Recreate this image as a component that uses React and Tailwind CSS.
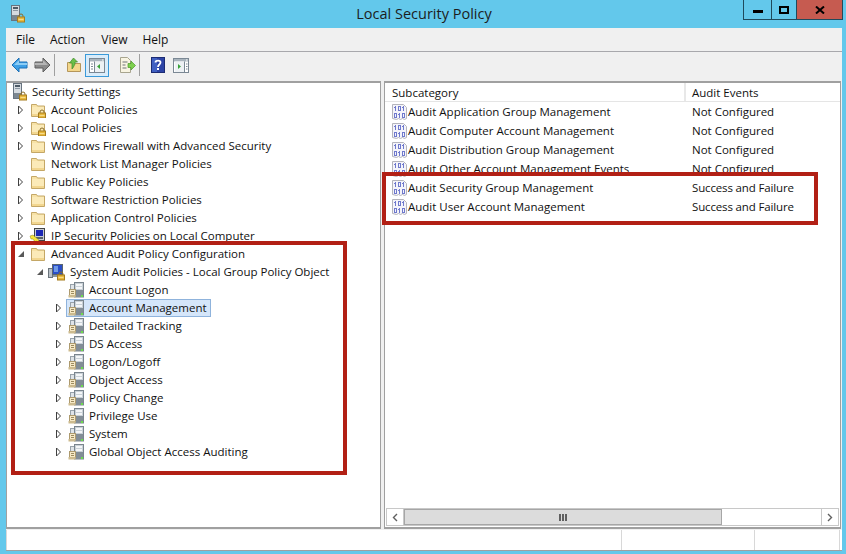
import React from "react";

const Lock = ({ x = 8, y = 8 }) => (
  <g transform={`translate(${x} ${y})`}>
    <path d="M2 3V2a2 2 0 0 1 4 0v1" fill="none" stroke="#8a6d2a" strokeWidth="1" />
    <rect x="0.5" y="3" width="7" height="5" fill="#e9b93f" stroke="#a67c1e" strokeWidth="1" />
    <rect x="1.5" y="5" width="5" height="1" fill="#f6dc8a" />
  </g>
);

const Folder = ({ lock }) => (
  <svg width="16" height="16" viewBox="0 0 16 16" className="shrink-0">
    <path d="M1.5 14.5V2.5h5l1 1.5h7v10.5z" fill="#f7e2a6" stroke="#c4a766" />
    <rect x="2" y="5" width="12" height="9" fill="#fbeab8" />
    <rect x="2" y="12" width="12" height="2" fill="#f2d68f" />
    {lock && <Lock x={8} y={8} />}
  </svg>
);

const ServerLock = () => (
  <svg width="16" height="18" viewBox="0 0 16 18" className="shrink-0">
    <rect x="1.5" y="0.5" width="8" height="15" fill="#d6dbe0" stroke="#67737f" />
    <rect x="3" y="2" width="5" height="2" fill="#4d5a66" />
    <rect x="3" y="5" width="5" height="1" fill="#8c98a3" />
    <rect x="2" y="10" width="7" height="5" fill="#7b8791" />
    <Lock x={7} y={9} />
  </svg>
);

const Shield = () => (
  <svg width="18" height="18" viewBox="0 0 18 18" className="shrink-0">
    <rect x="5.5" y="1.5" width="10" height="12" fill="#c7ccd1" stroke="#444" />
    <rect x="7" y="3" width="7" height="6" fill="#1b27b5" />
    <rect x="7" y="10" width="7" height="2" fill="#59636b" />
    <path d="M1 9l3-1 1 1 5 4-1 2-2-1-1 1-2-3-2 0z" fill="#f4e43a" stroke="#8a8420" strokeWidth="0.5" />
  </svg>
);

const SysAudit = () => (
  <svg width="18" height="18" viewBox="0 0 18 18" className="shrink-0">
    <rect x="0.5" y="5.5" width="4" height="9" fill="#b9c0c6" stroke="#6a747c" />
    <rect x="4.5" y="1.5" width="10" height="10" fill="#2b4fc7" stroke="#5a6670" />
    <rect x="6" y="3" width="4" height="6" fill="#6f9ae8" />
    <rect x="5" y="12" width="6" height="2" fill="#8b959d" />
    <Lock x={9} y={9} />
  </svg>
);

const AuditNode = () => (
  <svg width="16" height="16" viewBox="0 0 16 16" className="shrink-0">
    <rect x="2.5" y="2.5" width="5" height="6" fill="#dfe4e8" stroke="#98a2aa" />
    <rect x="6.5" y="0.5" width="9" height="14.5" fill="#c9d1d7" stroke="#7a858e" />
    <rect x="8" y="2" width="6" height="2" fill="#f4f6f8" />
    <rect x="8" y="5" width="6" height="2" fill="#f4f6f8" />
    <rect x="7" y="8" width="8" height="7" fill="#828d96" />
    <rect x="13" y="13" width="2" height="2" fill="#6ddc4d" />
    <rect x="1.5" y="7.5" width="6" height="6" fill="#f6e9c6" stroke="#ad9a6e" />
    <rect x="0.5" y="13" width="7" height="2.5" fill="#cdbb8e" />
    <rect x="3" y="9" width="3" height="1" fill="#9d8b5f" />
    <rect x="3" y="11" width="3" height="1" fill="#9d8b5f" />
  </svg>
);

const Binary = () => (
  <svg width="16" height="18" viewBox="0 0 16 18" className="shrink-0">
    <path d="M0.5 1.5h11l3 3v11l-2 1-2-1-2 1-2-1-2 1-4-1z" fill="#f4f4fa" stroke="#b4b4bc" />
    <g fill="#6f79cc">
      <path d="M2 4h1V3h1v5H3V5H2z" />
      <path d="M6 3h3v5H6zM7 4v3h1V4z" fillRule="evenodd" />
      <path d="M10 4h1V3h1v5h-1V5h-1z" />
      <path d="M2 10h3v5H2zM3 11v3h1v-3z" fillRule="evenodd" />
      <path d="M6 11h1v-1h1v5H7v-3H6z" />
      <path d="M10 10h3v5h-3zM11 11v3h1v-3z" fillRule="evenodd" />
    </g>
  </svg>
);

const Closed = () => (
  <svg width="8" height="10" viewBox="0 0 8 10">
    <path d="M1.5 1v8l4-4z" fill="#fff" stroke="#404040" />
  </svg>
);
const Open = () => (
  <svg width="8" height="10" viewBox="0 0 8 10">
    <path d="M7 2v6H1z" fill="#595959" />
  </svg>
);

function Row({ level, exp, icon, label, selected }) {
  const pad = { 1: "pl-[10px]", 2: "pl-[29px]", 3: "pl-[48px]" }[level];
  return (
    <div className={`h-[18px] flex items-center ${pad}`}>
      <span className="w-[10px] h-[18px] flex items-center justify-start shrink-0">
        {exp === "c" && <Closed />}
        {exp === "o" && <Open />}
      </span>
      <span
        className={
          selected
            ? "h-[18px] flex items-center ml-[1px] pl-[1px] pr-[3px] bg-[#d5e6fa] border border-[#8fb3dc] gap-[5px]"
            : "h-[18px] flex items-center ml-[3px] gap-[5px]"
        }
      >
        <span className="w-[16px] flex justify-center shrink-0">{icon}</span>
        <span className="whitespace-nowrap">{label}</span>
      </span>
    </div>
  );
}

const tree = [
  { level: 1, exp: "c", icon: <Folder lock />, label: "Account Policies" },
  { level: 1, exp: "c", icon: <Folder lock />, label: "Local Policies" },
  { level: 1, exp: "c", icon: <Folder />, label: "Windows Firewall with Advanced Security" },
  { level: 1, icon: <Folder />, label: "Network List Manager Policies" },
  { level: 1, exp: "c", icon: <Folder />, label: "Public Key Policies" },
  { level: 1, exp: "c", icon: <Folder />, label: "Software Restriction Policies" },
  { level: 1, exp: "c", icon: <Folder />, label: "Application Control Policies" },
  { level: 1, exp: "c", icon: <Shield />, label: "IP Security Policies on Local Computer" },
  { level: 1, exp: "o", icon: <Folder />, label: "Advanced Audit Policy Configuration" },
  { level: 2, exp: "o", icon: <SysAudit />, label: "System Audit Policies - Local Group Policy Object" },
  { level: 3, icon: <AuditNode />, label: "Account Logon" },
  { level: 3, exp: "c", icon: <AuditNode />, label: "Account Management", selected: true },
  { level: 3, exp: "c", icon: <AuditNode />, label: "Detailed Tracking" },
  { level: 3, exp: "c", icon: <AuditNode />, label: "DS Access" },
  { level: 3, exp: "c", icon: <AuditNode />, label: "Logon/Logoff" },
  { level: 3, exp: "c", icon: <AuditNode />, label: "Object Access" },
  { level: 3, exp: "c", icon: <AuditNode />, label: "Policy Change" },
  { level: 3, exp: "c", icon: <AuditNode />, label: "Privilege Use" },
  { level: 3, exp: "c", icon: <AuditNode />, label: "System" },
  { level: 3, exp: "c", icon: <AuditNode />, label: "Global Object Access Auditing" },
];

const list = [
  ["Audit Application Group Management", "Not Configured"],
  ["Audit Computer Account Management", "Not Configured"],
  ["Audit Distribution Group Management", "Not Configured"],
  ["Audit Other Account Management Events", "Not Configured"],
  ["Audit Security Group Management", "Success and Failure"],
  ["Audit User Account Management", "Success and Failure"],
];

const ArrowBack = ({ flip, on }) => (
  <svg width="17" height="16" viewBox="0 0 17 16" className={flip ? "-scale-x-100" : ""}>
    <path
      d="M8 1L1 8l7 7v-4h8V5H8z"
      fill={on ? "#3d9fe6" : "#8a8a8a"}
      stroke={on ? "#1a6fb5" : "#5f5f5f"}
      strokeLinejoin="round"
    />
    <path d="M8 3L3 8h13V6H8z" fill={on ? "#8ccdf5" : "#b5b5b5"} />
  </svg>
);

const UpFolder = () => (
  <svg width="16" height="16" viewBox="0 0 16 16">
    <path d="M1.5 14.5V5.5h4l1 1h8v8z" fill="#f3d68a" stroke="#b5965a" />
    <path d="M6 12V6L3.5 6 7.5 1l4 4H9v2c-1 2-2 4-3 5z" fill="#6cc04a" stroke="#3d8a28" strokeWidth="0.7" />
  </svg>
);

const PaneIcon = ({ right }) => (
  <svg width="16" height="15" viewBox="0 0 16 15">
    <rect x="0.5" y="0.5" width="15" height="14" fill="#fff" stroke="#7b8894" />
    <rect x="1" y="1" width="14" height="2.5" fill="#a9b4bd" />
    <rect x="13" y="1.5" width="1.5" height="1" fill="#fff" />
    <rect x={right ? "11" : "5"} y="3.5" width="1" height="11" fill="#7b8894" />
    {right ? (
      <>
        <rect x="2" y="3.5" width="9" height="10.5" fill="#edf1f4" />
        <path d="M5 6v5l3-2.5z" fill="#3aa33a" />
        <path d="M13 6h1.5M13 8.5h1.5M13 11h1.5" stroke="#7b8894" />
      </>
    ) : (
      <>
        <path d="M2 6h2M2 8.5h2M2 11h2" stroke="#7b8894" />
        <rect x="6" y="3.5" width="9" height="10.5" fill="#edf1f4" />
        <path d="M11 6v5l-3-2.5z" fill="#3aa33a" />
      </>
    )}
  </svg>
);

const ExportIcon = () => (
  <svg width="17" height="16" viewBox="0 0 17 16">
    <path d="M1.5 0.5h7l3 3v12h-10z" fill="#f8f4e2" stroke="#a8a58f" />
    <path d="M3.5 5h5M3.5 8h3M3.5 11h4" stroke="#6f7378" />
    <path d="M9 6.5h3V4l4.5 4.5L12 13v-2.5H9z" fill="#7ed04e" stroke="#4a9a2a" strokeWidth="0.7" />
  </svg>
);

const HelpIcon = () => (
  <svg width="14" height="16" viewBox="0 0 14 16">
    <rect x="0.5" y="0.5" width="13" height="15" fill="#2d44a6" stroke="#1c2b73" />
    <rect x="1" y="1" width="5" height="14" fill="#4060c2" />
    <path d="M4.5 5.5C4.5 3 9.5 3 9.5 5.5c0 2-2.5 2-2.5 4.5" fill="none" stroke="#fff" strokeWidth="1.8" />
    <rect x="6" y="11" width="2" height="2" fill="#fff" />
  </svg>
);

const Sep = ({ cls }) => <div className={`w-px h-[22px] bg-[#a0a0a0] ${cls}`} />;

export default function App() {
  return (
    <div className="relative w-[846px] h-[554px] bg-[#63c8eb] flex flex-col overflow-hidden font-['Open_Sans','Noto_Sans',sans-serif] text-[11.5px] text-[#111]">
      {/* title bar */}
      <div className="h-[28px] flex shrink-0">
        <div className="pl-[10px] pt-[5px]">
          <ServerLock />
        </div>
        <div className="flex-1 text-center text-[14.5px] leading-[28px] text-[#1c1c1c] pl-[79px]">Local Security Policy</div>
        <div className="flex h-[20px] mr-[3px] border border-t-0 border-[#1f4a5c]">
          <button className="w-[28px] flex items-center justify-center border-r border-[#1f4a5c]">
            <span className="w-[10px] h-[3px] bg-black mt-[3px]" />
          </button>
          <button className="w-[25px] flex items-center justify-center border-r border-[#1f4a5c]">
            <span className="w-[10px] h-[8px] border-2 border-black" />
          </button>
          <button className="w-[45px] flex items-center justify-center bg-[#c65b50]">
            <svg width="10" height="8" viewBox="0 0 10 8">
              <path d="M1 0.5l8 7M9 0.5l-8 7" stroke="#000" strokeWidth="2" />
            </svg>
          </button>
        </div>
      </div>

      {/* window */}
      <div className="ml-[6px] mr-[4px] h-[523px] bg-[#f0f0f0] flex flex-col border-b border-[#a0a0a0]">
        <div className="h-[23px] mt-px flex items-center border-b border-[#a8a8ac] shrink-0 text-[12px]">
          <span className="ml-[10px]">File</span>
          <span className="ml-[15px]">Action</span>
          <span className="ml-[16px]">View</span>
          <span className="ml-[15px]">Help</span>
        </div>
        <div className="h-[29px] pb-[3px] flex items-center shrink-0">
          <span className="ml-[5px] flex"><ArrowBack on /></span>
          <span className="ml-[6px] flex"><ArrowBack flip /></span>
          <Sep cls="ml-[3px]" />
          <span className="ml-[11px] flex"><UpFolder /></span>
          <span className="ml-[3px] w-[24px] h-[23px] flex items-center justify-center bg-[#d9ecfa] border border-[#3a9ad9]"><PaneIcon /></span>
          <span className="ml-[10px] flex"><ExportIcon /></span>
          <Sep cls="ml-[3px]" />
          <span className="ml-[11px] flex"><HelpIcon /></span>
          <span className="ml-[8px] flex"><PaneIcon right /></span>
        </div>

        <div className="h-[448px] flex shrink-0">
          {/* tree */}
          <div className="w-[375px] bg-white border-t-2 border-l border-b-2 border-r border-[#a0a0a0] shrink-0">
            <div className="h-[18px] flex items-center pl-[5px] gap-[4px]">
              <ServerLock />
              <span>Security Settings</span>
            </div>
            {tree.map((r) => (
              <Row key={r.label} {...r} />
            ))}
          </div>
          <div className="w-[3px] shrink-0" />
          {/* list */}
          <div className="w-[457px] bg-white border-t-2 border-l border-b-2 border-[#a0a0a0] flex flex-col shrink-0 border-r">
            <div className="h-[19px] flex items-center border-b border-[#e5e5e5] shrink-0">
              <div className="w-[301px] pl-[7px] pt-[2px] h-full flex items-center border-r-2 border-[#e8e8e8]">Subcategory</div>
              <div className="pl-[6px] pt-[2px] h-full flex items-center">Audit Events</div>
            </div>
            <div className="flex-1">
              {list.map(([a, b]) => (
                <div key={a} className="h-[19px] flex items-center">
                  <div className="w-[303px] pl-[7px] flex items-center whitespace-nowrap">
                    <Binary />
                    <span>{a}</span>
                  </div>
                  <div className={b.startsWith("Success") ? "pl-[4px] whitespace-nowrap tracking-[-0.15px]" : "pl-[4px] whitespace-nowrap"}>{b}</div>
                </div>
              ))}
            </div>
            <div className="h-[18px] mx-px mb-px flex border border-[#c8c8c8] shrink-0">
              <div className="w-[17px] flex items-center justify-center border-r border-[#c8c8c8]">
                <svg width="6" height="9" viewBox="0 0 6 9"><path d="M5 1L1.5 4.5 5 8" fill="none" stroke="#606060" strokeWidth="1.4" /></svg>
              </div>
              <div className="w-[318px] bg-[#dcdcdc] border border-[#a6a6a6] flex items-center justify-center gap-px">
                <span className="w-[2px] h-[7px] bg-[#606060]" />
                <span className="w-[2px] h-[7px] bg-[#606060]" />
                <span className="w-[2px] h-[7px] bg-[#606060]" />
              </div>
              <div className="flex-1" />
              <div className="w-[17px] flex items-center justify-center border-l border-[#c8c8c8]">
                <svg width="6" height="9" viewBox="0 0 6 9"><path d="M1 1l3.5 3.5L1 8" fill="none" stroke="#606060" strokeWidth="1.4" /></svg>
              </div>
            </div>
          </div>
        </div>

        {/* status */}
        <div className="flex-1 bg-white flex mt-px border-l border-[#d8d8d8]">
          <div className="w-[615px] border-r border-[#d8d8d8]" />
          <div className="w-[133px] border-r border-[#d8d8d8]" />
          <div className="w-[85px] border-r border-[#d8d8d8]" />
        </div>
      </div>

      {/* annotation boxes */}
      <div className="absolute left-[11px] top-[241px] w-[336px] h-[234px] border-[4px] border-[#b22015]" />
      <div className="absolute left-[382px] top-[172px] w-[436px] h-[53px] border-[4px] border-[#b22015]" />
    </div>
  );
}
